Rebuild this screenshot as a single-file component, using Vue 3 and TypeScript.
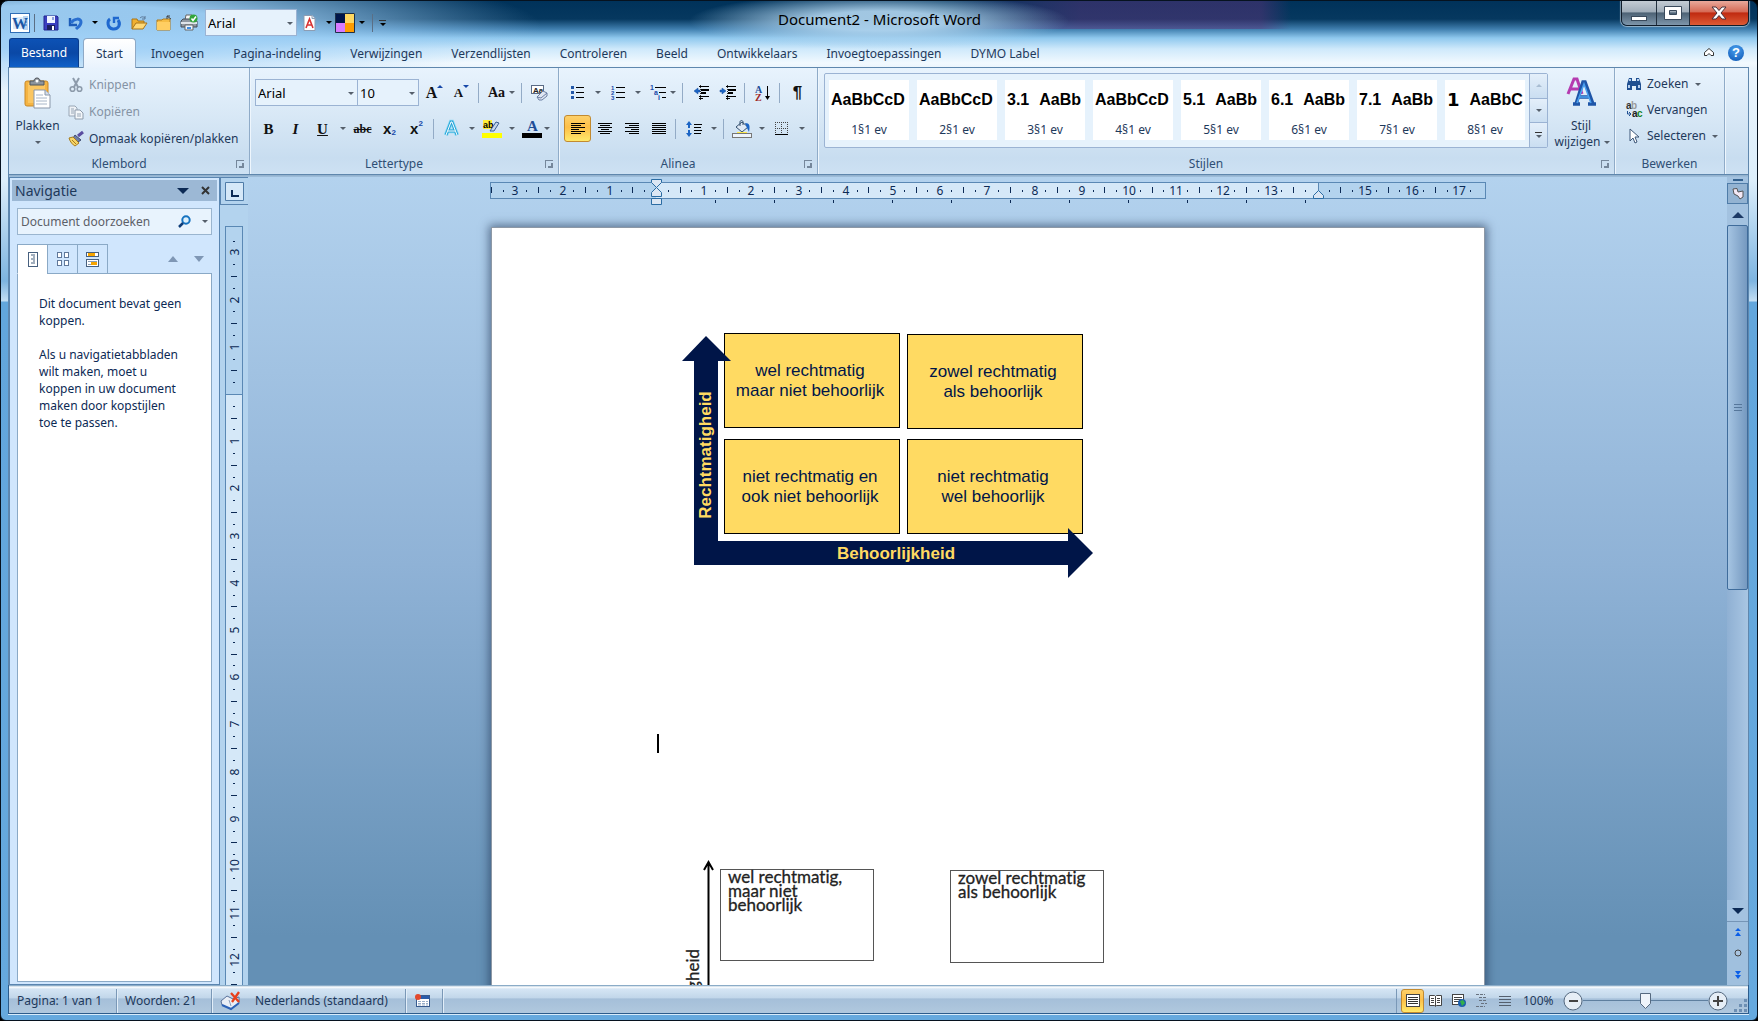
<script setup lang="ts">
import { ref } from 'vue'

interface Tool {
  name: string
  icon?: string
  text?: string
  kind?: string
  drop?: boolean
  tight?: boolean
  sep?: boolean
  active?: boolean
}

const font = ref('Arial')
const quickFont = ref('Arial')
const size = ref('10')
const zoom = ref(50)
const query = ref('')

const lines = (rows: [number, number, number][], c = '#000') =>
  rows.map(([x, y, w]) => `<rect x="${x}" y="${y}" width="${w}" height="1" fill="${c}"/>`).join('')

const icons: Record<string, string> = {
  word: '<rect x=".5" y=".5" width="19" height="19" fill="#fff" stroke="#2f6db5"/><rect x="3" y="4" width="13" height="12" fill="#dcebfa"/><path d="M13 3h5v14h-5z" fill="#b9d5f2"/><path d="M15 6h2M15 9h2M15 12h2" stroke="#2f6db5"/><text x="2" y="16" font-family="Liberation Serif, serif" font-weight="bold" font-size="16" fill="#1a57a5">W</text>',
  save: '<path d="M1 1h13l1 1v13H1z" fill="#3b3fc0" stroke="#23278f"/><rect x="4" y="1" width="8" height="7" fill="#eef3ff"/><rect x="9" y="2" width="2" height="3" fill="#8fa3dc"/><rect x="4" y="10" width="8" height="5" fill="#1d2160"/><rect x="9" y="11" width="2" height="4" fill="#fff"/>',
  undo: '<path d="M2 3v7h7" fill="none" stroke="#1c5cb8" stroke-width="2.4"/><path d="M3 8c3-5 10-5 10-1 0 4-3 5-5 7" fill="none" stroke="#2a6fd0" stroke-width="3"/>',
  redo: '<path d="M4 4C1 6 1 13 7 14c6 .5 8-5 5-9" fill="none" stroke="#1f68cf" stroke-width="3"/><path d="M8 8V3h5" fill="none" stroke="#1f68cf" stroke-width="2.4"/>',
  open: '<path d="M1 14V4h5l1 2h6v3" fill="#f0b030" stroke="#a87418"/><path d="M1 14L5 8h11l-4 6z" fill="#ffd976" stroke="#a87418"/><path d="M9 3c2-2 4-1 5 0m0-2v3h-3" fill="none" stroke="#5b7695"/>',
  folder: '<path d="M1 5h5l1-1h7v11H1z" fill="#f6bd45" stroke="#b07a1a"/><path d="M1 7h13v8H1z" fill="#ffce62"/><path d="M11 1l4 3M11 1h3M11 1v3" stroke="#444" fill="none"/>',
  print: '<path d="M5 6l1-5h6l1 5z" fill="#f6f6f6" stroke="#666"/><path d="M1 7l2-2h12l2 2v6H1z" fill="#8f98a2" stroke="#454d56"/><path d="M1 8h16v2H1z" fill="#dfe4e9"/><path d="M5 11h8v5H5z" fill="#eef6ff" stroke="#666"/><rect x="7" y="13" width="4" height="2" fill="#3e8ce0"/><circle cx="13.500" cy="4.500" r="4" fill="#32a53b"/><path d="M11.500 4.500l1.500 2 3-4" fill="none" stroke="#fff" stroke-width="1.500"/>',
  docA: '<path d="M1 .5h8l3 3v12H1z" fill="#fff" stroke="#8d9db3"/><path d="M9 .5v3h3" fill="#dfe7f1" stroke="#8d9db3"/><path d="M3 13l3.500-9L10 13M4.500 10h4" fill="none" stroke="#d93333" stroke-width="1.600"/>',
  swatch: '<path d="M0 0h10v10H0z" fill="#00154a"/><path d="M10 0h10v10H10z" fill="#ffd860"/><path d="M0 10h10v10H0z" fill="#d77bff"/><path d="M10 10h10v10H10z" fill="#ff9c00"/><path d="M.5.5h19v19H.5z" fill="none" stroke="#1d3148"/>',
  paste: '<rect x="1" y="4" width="23" height="25" rx="2" fill="#f5b443" stroke="#c98827"/><rect x="4" y="6" width="17" height="20" fill="#fbc661"/><path d="M6 4h4c0-4 6-4 6 0h4v4H6z" fill="#8d949c" stroke="#50565d"/><circle cx="13" cy="4" r="1.500" fill="#fff"/><path d="M10 13h11l5 5v13H10z" fill="#fff" stroke="#8a97aa"/><path d="M21 13v5h5" fill="#d5dfeb" stroke="#8a97aa"/><path d="M12 18h7M12 21h11M12 24h11M12 27h11" stroke="#a8b6c8"/>',
  cut: '<path d="M5 1l5 9M11 1L6 10" stroke="#8d9bab" stroke-width="2" fill="none"/><circle cx="4.500" cy="12" r="2.300" fill="none" stroke="#8d9bab" stroke-width="1.600"/><circle cx="11.500" cy="12" r="2.300" fill="none" stroke="#8d9bab" stroke-width="1.600"/>',
  copy: '<path d="M1 2h6l2 2v8H1z" fill="#eef2f7" stroke="#98a6b6"/><path d="M7 6h5l3 3v6H7z" fill="#f4f7fa" stroke="#8d9bab"/><path d="M3 5h3M3 7h3M3 9h3M9 10h4M9 12h4" stroke="#98a6b6"/>',
  brush: '<path d="M15 1l-5 4" stroke="#5a4da0" stroke-width="3"/><path d="M7 4l6 5-3 2-5-4z" fill="#6f7ea5" stroke="#404c70"/><path d="M1 7l4-1 6 6-4 3c-2-1-5-4-6-8z" fill="#f7d568" stroke="#a77c1c"/><path d="M4 9l4 4" stroke="#a77c1c"/>',
  clear: '<rect x=".5" y="1.500" width="12" height="8" fill="#fff" stroke="#5a6b85"/><text x="2" y="9" font-family="Liberation Sans, sans-serif" font-weight="bold" font-size="8" fill="#222">Aa</text><path d="M6 13l6-6 4 2v3l-5 4H8z" fill="#dfe6f2" stroke="#6b7fa3"/><path d="M6 13l4 1 6-5" fill="none" stroke="#6b7fa3"/>',
  glow: '<path d="M3 15L8 2h1l5 13M5 11h7" fill="none" stroke="#8fdcf5" stroke-width="4.500"/><path d="M3 15L8 2h1l5 13M5 11h7" fill="none" stroke="#2aa5d8" stroke-width="3"/><path d="M3 15L8 2h1l5 13M5 11h7" fill="none" stroke="#fff" stroke-width="1"/>',
  mark: '<rect x="0" y="13" width="20" height="5" fill="#ff0"/><rect x="1" y="0" width="9" height="9" fill="#ffef3a"/><text x="1" y="8" font-family="Liberation Sans, sans-serif" font-weight="bold" font-size="9">ab</text><path d="M8 11l6-9 3 1-5 8z" fill="#c5d6ec" stroke="#3b5f94"/>',
  color: '<rect x="0" y="13" width="20" height="5"/><text x="5" y="11" font-family="Liberation Serif, serif" font-weight="bold" font-size="15" fill="#1f4e97">A</text>',
  bullets: [2, 7, 12].map(y => `<rect x="0" y="${y - 1}" width="3" height="3" fill="#2458a8"/><rect x="5" y="${y}" width="8" height="1"/>`).join(''),
  numbers: [2, 7, 12].map((y, i) => `<text x="0" y="${y + 3}" font-family="Liberation Sans, sans-serif" font-weight="bold" font-size="6" fill="#1748a8">${i + 1}</text><rect x="5" y="${y}" width="9" height="1"/>`).join(''),
  multi: '<g font-family="Liberation Sans, sans-serif" font-weight="bold" font-size="7" fill="#1748a8"><text x="0" y="5">1</text><text x="4" y="10">a</text><text x="8" y="15">i</text></g>' + lines([[5, 2, 11], [9, 7, 7], [12, 12, 4]]),
  outdent: lines([[6, 1, 10], [8, 4, 8], [8, 5, 8], [8, 7, 5], [8, 8, 5], [6, 11, 10], [6, 13, 4]]) + '<path d="M5 3v2h2v2H5v2L1 6z" fill="#1b64c4" stroke="#1b4f9c" stroke-width=".5"/><path d="M7.500 0v15" stroke="#333" stroke-dasharray="1 1"/>',
  indent: lines([[6, 1, 10], [8, 4, 8], [8, 5, 8], [8, 7, 5], [8, 8, 5], [6, 11, 10], [6, 13, 4]]) + '<path d="M2 3v2H0v2h2v2l4-3z" fill="#1b64c4" stroke="#1b4f9c" stroke-width=".5"/><path d="M7.500 0v15" stroke="#333" stroke-dasharray="1 1"/>',
  sort: '<g font-family="Liberation Serif, serif" font-weight="bold" font-size="10"><text x="0" y="8" fill="#1f4e97">A</text><text x="0" y="16" fill="#a02828">Z</text></g><path d="M12.500 1v12" stroke="#000"/><path d="M10 11h5l-2.500 4z"/>',
  left: lines([[0, 0, 14], [0, 2, 10], [0, 4, 14], [0, 6, 8], [0, 8, 14], [0, 10, 10]]),
  center: lines([[0, 0, 14], [2, 2, 10], [0, 4, 14], [3, 6, 8], [0, 8, 14], [2, 10, 10]]),
  right: lines([[0, 0, 14], [4, 2, 10], [0, 4, 14], [6, 6, 8], [0, 8, 14], [4, 10, 10]]),
  justify: lines([[0, 0, 14], [0, 2, 14], [0, 4, 14], [0, 6, 14], [0, 8, 14], [0, 10, 14]]),
  spacing: '<path d="M3 0L0 4h2v8H0l3 4 3-4H4V4h2z" fill="#1b64c4"/><rect x="2" y="7" width="2" height="2" fill="#cfe2f4"/>' + lines([[8, 3, 8], [8, 6, 7], [8, 9, 8], [8, 12, 7]]),
  fill: '<rect x=".5" y="13.500" width="19" height="4" fill="#eef4fb" stroke="#777"/><path d="M4 7l6-5 6 5-6 5z" fill="#dfe9f5" stroke="#34506f"/><path d="M8 6V2c0-2 3-2 3 0v3" fill="none" stroke="#34506f"/><path d="M13 3c5 0 5 3 4 9l-2-4z" fill="#1b64c4"/><rect x="5" y="12" width="10" height="1" fill="#ffe94a"/>',
  borders: '<path d="M.5 0v12M6.500 0v12M12.500 0v12M0 .5h13M0 6.500h13" stroke="#444" stroke-dasharray="1 1"/><rect x="0" y="12" width="13" height="1"/>',
  styles: '<path d="M2 17L8 2h3l5 15M5 12h8" fill="none" stroke="#b53bb0" stroke-width="3"/><path d="M10 27L17 5h2l8 22M12 20h12M7 27h7M22 27h8" fill="none" stroke="#1e55a8" stroke-width="3.500"/><path d="M11 26L18 7l7 19M13 20h10" fill="none" stroke="#4aa0ee" stroke-width="1.500"/>',
  find: '<path d="M1 8l2-6h3v12H1zM15 8l-2-6h-3v12h5z" fill="#1f4f91"/><path d="M6 5h4v5H6z" fill="#1f4f91"/><path d="M3 3h2v2H3zM11 3h2v2h-2zM2 9h2v3H2zM12 9h2v3h-2z" fill="#b7d0ee"/>',
  replace: '<g font-family="Liberation Sans, sans-serif" font-weight="bold" font-size="10"><text x="0" y="7" fill="#333">a</text><text x="5" y="7" fill="#999">b</text><text x="6" y="15" fill="#222">a</text><text x="11" y="15" fill="#17852b">c</text></g><path d="M1.500 9v3h3M3 10l2 2-2 2" fill="none" stroke="#1f4f91"/>',
  select: '<path d="M4 1v12l3-3 2 5 2-1-2-5h4z" fill="#fff" stroke="#3d5678"/>',
  search: '<circle cx="8" cy="5" r="3.700" fill="#dff0fb" stroke="#1673c0" stroke-width="2"/><path d="M5 8l-4 4" stroke="#0d3c78" stroke-width="2.500"/>',
  navDoc: '<rect x=".5" y=".5" width="9" height="14" fill="#fff" stroke="#47607f"/><path d="M3 3h4M5 5h2M3 7h4M5 9h2M3 11h4" stroke="#47607f"/>',
  navGrid: '<g fill="#fff" stroke="#60789a"><rect x=".5" y=".5" width="4" height="5"/><rect x="7.500" y=".5" width="4" height="5"/><rect x=".5" y="8.500" width="4" height="5"/><rect x="7.500" y="8.500" width="4" height="5"/></g>',
  navList: '<rect x=".5" y=".5" width="12" height="4" fill="#fff" stroke="#47607f"/><rect x="2" y="1" width="7" height="3" fill="#f6a400"/><rect x=".5" y="7.500" width="12" height="7" fill="#fff" stroke="#47607f"/><path d="M2 9.500h9M2 12.500h9" stroke="#8a9db5"/><rect x="5" y="10" width="6" height="3" fill="#f6a400"/>',
  proof: '<path d="M1 10l6-5 6 3 6-2v6l-8 6-9-4z" fill="#e9eef6" stroke="#59719a"/><path d="M2 14l9 4 8-6" fill="none" stroke="#2c62b8" stroke-width="2"/><path d="M9 9l2 6" stroke="#8a9dbb"/><path d="M11 2l8 9M19 1l-7 10" stroke="#e8401c" stroke-width="2.300"/>',
  macro: '<rect x="1.500" y="2.500" width="13" height="11" fill="#fff" stroke="#375b8f"/><rect x="2" y="3" width="12" height="3" fill="#2a5caa"/><path d="M3 8.500h10M3 10.500h10M3 12h10" stroke="#98aec9" stroke-dasharray="3 1"/><circle cx="3" cy="4" r="3" fill="#e2492d"/>',
  vPrint: '<rect x=".5" y=".5" width="13" height="12" fill="#fff" stroke="#444"/><path d="M2 3.500h10M2 5.500h10M2 7.500h10M2 9.500h10" stroke="#333"/>',
  vRead: '<path d="M.5 1.500h5l1 1 1-1h5v10h-5l-1 1-1-1h-5z" fill="#fff" stroke="#444"/><path d="M6.500 2v10M2 4.500h3M2 6.500h3M2 8.500h3M8 4.500h3M8 6.500h3M8 8.500h3" stroke="#444"/>',
  vWeb: '<rect x=".5" y=".5" width="11" height="10" fill="#fff" stroke="#444"/><path d="M2 3.500h8M2 5.500h8M2 7.500h5" stroke="#444"/><circle cx="10" cy="9" r="4" fill="#1c5fae"/><path d="M8 7l3-1 2 3-3 3z" fill="#33b04a"/>',
  vOutline: '<path d="M0 .5h9M3 3.500h8M3 6.500h8M5 9.500h6M0 12.500h9" stroke="#68727f" stroke-dasharray="3 1"/>',
  vDraft: '<path d="M0 1.500h12M0 4.500h12M0 7.500h12M0 10.500h12" stroke="#55606e"/>',
}

const box = (name: string): string =>
  ({
    word: '0 0 20 20', swatch: '0 0 20 20', save: '0 0 16 16', undo: '0 0 16 16', redo: '0 0 16 16', print: '0 0 18 17', docA: '0 0 13 16',
    paste: '0 0 27 32', mark: '0 0 20 18', color: '0 0 20 18', fill: '0 0 20 18', bullets: '0 0 14 15', numbers: '0 0 14 15',
    left: '0 0 14 11', center: '0 0 14 11', right: '0 0 14 11', justify: '0 0 14 11', borders: '0 0 13 13', styles: '0 0 31 29',
    navDoc: '0 0 10 15', navGrid: '0 0 12 14', navList: '0 0 13 15', search: '0 0 13 14', proof: '0 0 21 20', glow: '0 0 17 17', clear: '0 0 17 17',
    vPrint: '0 0 14 13', vRead: '0 0 13 13', vWeb: '0 0 14 13', vOutline: '0 0 11 13', vDraft: '0 0 12 12',
  })[name] ?? '0 0 16 16'
const w = (name: string): string => box(name).split(' ')[2]
const h = (name: string): string => box(name).split(' ')[3]

const tabs = ['Invoegen', 'Pagina-indeling', 'Verwijzingen', 'Verzendlijsten', 'Controleren', 'Beeld', 'Ontwikkelaars', 'Invoegtoepassingen', 'DYMO Label']

const fontTop: Tool[] = [
  { name: 'Groter', text: 'A', kind: 'larger' },
  { name: 'Kleiner', text: 'A', kind: 'shrink' },
  { name: 's1', sep: true },
  { name: 'Hoofdlettergebruik', text: 'Aa', kind: 'case', drop: true, tight: true },
  { name: 's2', sep: true },
  { name: 'Opmaak wissen', icon: 'clear' },
]
const fontBottom: Tool[] = [
  { name: 'Vet', text: 'B', kind: 'bold' },
  { name: 'Cursief', text: 'I', kind: 'italic' },
  { name: 'Onderstrepen', text: 'U', kind: 'under', drop: true },
  { name: 'Doorhalen', text: 'abc', kind: 'strike' },
  { name: 'Subscript', text: 'x', kind: 'sub' },
  { name: 'Superscript', text: 'x', kind: 'sup' },
  { name: 's1', sep: true },
  { name: 'Teksteffecten', icon: 'glow', drop: true },
  { name: 'Markeren', icon: 'mark', drop: true },
  { name: 'Tekstkleur', icon: 'color', drop: true, tight: true },
]
const paraTop: Tool[] = [
  { name: 'Opsommingstekens', icon: 'bullets', drop: true },
  { name: 'Nummering', icon: 'numbers', drop: true },
  { name: 'Lijst met meerdere niveaus', icon: 'multi', drop: true, tight: true },
  { name: 's1', sep: true },
  { name: 'Inspringing verkleinen', icon: 'outdent' },
  { name: 'Inspringing vergroten', icon: 'indent' },
  { name: 's2', sep: true },
  { name: 'Sorteren', icon: 'sort' },
  { name: 's3', sep: true },
  { name: 'Alles weergeven', text: '¶', kind: 'pilcrow' },
]
const paraBottom: Tool[] = [
  { name: 'Links uitlijnen', icon: 'left', active: true },
  { name: 'Centreren', icon: 'center' },
  { name: 'Rechts uitlijnen', icon: 'right' },
  { name: 'Uitvullen', icon: 'justify' },
  { name: 's1', sep: true },
  { name: 'Regelafstand', icon: 'spacing', drop: true },
  { name: 's2', sep: true },
  { name: 'Arcering', icon: 'fill', drop: true },
  { name: 'Randen', icon: 'borders', drop: true },
]

const styleCells = [
  { lead: '', sample: 'AaBbCcD', label: '1§1 ev' },
  { lead: '', sample: 'AaBbCcD', label: '2§1 ev' },
  { lead: '3.1', sample: 'AaBb', label: '3§1 ev' },
  { lead: '', sample: 'AaBbCcD', label: '4§1 ev' },
  { lead: '5.1', sample: 'AaBb', label: '5§1 ev' },
  { lead: '6.1', sample: 'AaBb', label: '6§1 ev' },
  { lead: '7.1', sample: 'AaBb', label: '7§1 ev' },
  { lead: '1', sample: 'AaBbC', label: '8§1 ev', big: true },
]

/* Ruler marks: a number per centimetre, a tick at the half, dots at the quarters. */
const CM = 47.2
const marks = (from: number, to: number, origin: number, skip: number[]) => {
  const out: { pos: number; type: 'n' | 'l' | 'd'; label: number }[] = []
  for (let q = from; q <= to; q++) {
    const pos = Math.round(origin + (q * CM) / 4)
    const cm = Math.abs(q / 4)
    if (q % 4 === 0) {
      if (!skip.includes(q / 4)) out.push({ pos, type: 'n', label: cm })
    } else out.push({ pos, type: q % 2 === 0 ? 'l' : 'd', label: 0 })
  }
  return out
}
const hMarks = marks(-14, 69, 166, [0, 14])
const vMarks = marks(-13, 50, 168, [0])
const tabStops = Array.from({ length: 11 }, (_, i) => Math.round(166 + (i + 1) * 59))

const views = [
  { icon: 'vPrint', name: 'Afdrukweergave', active: true },
  { icon: 'vRead', name: 'Leesweergave' },
  { icon: 'vWeb', name: 'Weblayout' },
  { icon: 'vOutline', name: 'Overzicht' },
  { icon: 'vDraft', name: 'Concept' },
]
</script>

<template>
  <div class="window">
    <header class="titlebar">
      <div class="quick">
        <button class="word" aria-label="Word"><svg width="20" height="20" viewBox="0 0 20 20" v-html="icons.word" /></button>
        <i class="qsep" />
        <template v-for="q in ['save', 'undo', 'redo', 'open', 'folder', 'print']" :key="q">
          <button class="qtool" :aria-label="q"><svg :width="w(q)" :height="h(q)" :viewBox="box(q)" v-html="icons[q]" /></button>
          <button v-if="q === 'undo'" class="arrow dark" aria-label="Meer" />
        </template>
        <label class="combo quickfont">
          <select v-model="quickFont" aria-label="Lettertype snelkeuze"><option>Arial</option></select>
          <span class="arrow" />
        </label>
        <button class="qtool" aria-label="Stijl"><svg width="13" height="16" viewBox="0 0 13 16" v-html="icons.docA" /></button>
        <button class="arrow dark" aria-label="Meer" />
        <button class="word" aria-label="Kleuren"><svg width="20" height="20" viewBox="0 0 20 20" v-html="icons.swatch" /></button>
        <button class="arrow dark" aria-label="Meer" />
        <i class="qsep" />
        <button class="arrow dark lined" aria-label="Werkbalk aanpassen" />
      </div>
      <h1>Document2 - Microsoft Word</h1>
      <div class="controls">
        <div class="winbuttons">
          <button class="min" aria-label="Minimaliseren"><svg width="18" height="14"><rect x="1.500" y="8.500" width="15" height="4" fill="#fff" stroke="#3a4a5c" /></svg></button>
          <button class="max" aria-label="Maximaliseren"><svg width="18" height="14"><path d="M.5.5h17v13H.5zM5.500 4.500h7v4h-7z" fill="#fff" fill-rule="evenodd" stroke="#3a4a5c" /></svg></button>
          <button class="close" aria-label="Sluiten"><svg width="16" height="14"><path d="M1 1h4l3 3.500L11 1h4l-5 6 5 6h-4L8 9.500 5 13H1l5-6z" fill="#fff" stroke="#4a3038" /></svg></button>
        </div>
      </div>
    </header>

    <nav class="tabs" aria-label="Lint">
      <button class="file">Bestand</button>
      <button class="tab current">Start</button>
      <button v-for="t in tabs" :key="t" class="tab">{{ t }}</button>
      <span class="grow" />
      <button class="iconbtn" aria-label="Lint minimaliseren"><svg width="10" height="9"><path d="M.5 7.500v-3L5 .5l4.500 4v3L7 7.500 5 5.500l-2 2z" fill="#fff" stroke="#333" /></svg></button>
      <button class="help" aria-label="Help">?</button>
    </nav>

    <section class="ribbon">
      <div class="group clipboard">
        <div class="body">
          <button class="big">
            <svg width="27" height="32" viewBox="0 0 27 32" v-html="icons.paste" />
            <span>Plakken</span><span class="arrow" />
          </button>
          <div class="stack">
            <button disabled><svg width="16" height="16" v-html="icons.cut" />Knippen</button>
            <button disabled><svg width="16" height="16" v-html="icons.copy" />Kopiëren</button>
            <button><svg width="16" height="16" v-html="icons.brush" />Opmaak kopiëren/plakken</button>
          </div>
        </div>
        <footer>Klembord<i class="launch" /></footer>
      </div>

      <div class="group font">
        <div class="body rows">
          <div class="row">
            <label class="combo family"><select v-model="font" aria-label="Lettertype"><option>Arial</option></select><span class="arrow" /></label>
            <label class="combo size"><select v-model="size" aria-label="Tekengrootte"><option>10</option></select><span class="arrow" /></label>
            <template v-for="t in fontTop" :key="t.name">
              <i v-if="t.sep" class="sep" />
              <button v-else class="tool" :class="t.kind" :aria-label="t.name"><svg v-if="t.icon" :width="w(t.icon)" :height="h(t.icon)" :viewBox="box(t.icon)" v-html="icons[t.icon]" />{{ t.text }}</button>
              <button v-if="t.drop" class="arrow" :class="{ tight: t.tight }" aria-label="Meer" />
            </template>
          </div>
          <div class="row">
            <template v-for="t in fontBottom" :key="t.name">
              <i v-if="t.sep" class="sep" />
              <button v-else class="tool" :class="t.kind" :aria-label="t.name"><svg v-if="t.icon" :width="w(t.icon)" :height="h(t.icon)" :viewBox="box(t.icon)" v-html="icons[t.icon]" />{{ t.text }}<small v-if="t.kind === 'sub' || t.kind === 'sup'">2</small></button>
              <button v-if="t.drop" class="arrow" :class="{ tight: t.tight }" aria-label="Meer" />
            </template>
          </div>
        </div>
        <footer>Lettertype<i class="launch" /></footer>
      </div>

      <div class="group para">
        <div class="body rows">
          <div v-for="(r, n) in [paraTop, paraBottom]" :key="n" class="row">
            <template v-for="t in r" :key="t.name">
              <i v-if="t.sep" class="sep" />
              <button v-else class="tool" :class="[t.kind, { active: t.active }]" :aria-label="t.name"><svg v-if="t.icon" :width="w(t.icon)" :height="h(t.icon)" :viewBox="box(t.icon)" v-html="icons[t.icon]" />{{ t.text }}</button>
              <button v-if="t.drop" class="arrow" :class="{ tight: t.tight }" aria-label="Meer" />
            </template>
          </div>
        </div>
        <footer>Alinea<i class="launch" /></footer>
      </div>

      <div class="group styles">
        <div class="body">
          <div class="gallery">
            <div class="cells">
              <button v-for="s in styleCells" :key="s.label" class="cell">
                <span class="sample"><b v-if="s.lead" :class="{ first: s.big }">{{ s.lead }}</b><b>{{ s.sample }}</b></span>
                <span>{{ s.label }}</span>
              </button>
            </div>
            <div class="scroller">
              <button class="arrow up off" aria-label="Omhoog" />
              <button class="arrow" aria-label="Omlaag" />
              <button class="arrow lined" aria-label="Meer stijlen" />
            </div>
          </div>
          <button class="big change">
            <svg width="31" height="29" viewBox="0 0 31 29" v-html="icons.styles" />
            <span>Stijl</span>
            <span class="line">wijzigen <i class="arrow" /></span>
          </button>
        </div>
        <footer>Stijlen<i class="launch" /></footer>
      </div>

      <div class="group edit">
        <div class="body">
          <div class="stack">
            <button><svg width="16" height="16" v-html="icons.find" />Zoeken<i class="arrow" /></button>
            <button><svg width="16" height="16" v-html="icons.replace" />Vervangen</button>
            <button><svg width="16" height="16" v-html="icons.select" />Selecteren<i class="arrow" /></button>
          </div>
        </div>
        <footer>Bewerken</footer>
      </div>
    </section>

    <main class="work">
      <aside class="pane">
        <div class="panehead"><h2>Navigatie</h2><button class="arrow wide" aria-label="Opties" /><button class="x" aria-label="Sluiten"><svg width="9" height="9"><path d="M1 1l7 7M8 1L1 8" stroke="#333" stroke-width="2" /></svg></button></div>
        <label class="searchbox">
          <input v-model="query" type="text" placeholder="Document doorzoeken" aria-label="Document doorzoeken">
          <svg width="13" height="14" viewBox="0 0 13 14" v-html="icons.search" /><i class="arrow" />
        </label>
        <div class="panetabs">
          <button v-for="n in ['navDoc', 'navGrid', 'navList']" :key="n" :class="{ on: n === 'navDoc' }" :aria-label="n"><svg :width="w(n)" :height="h(n)" v-html="icons[n]" /></button>
          <span class="grow" />
          <i class="arrow up mid" /><i class="arrow mid" />
        </div>
        <div class="panebody">
          <p>Dit document bevat geen koppen.</p>
          <p>Als u navigatietabbladen wilt maken, moet u koppen in uw document maken door kopstijlen toe te passen.</p>
        </div>
      </aside>

      <div class="vside">
        <button class="corner" aria-label="Tabstop"><svg width="19" height="19"><path d="M.5.5h18v18H.5z" fill="#d5e8f8" stroke="#4f7ca8" /><path d="M7 8v6h7" fill="none" stroke="#0c2a55" stroke-width="2" /></svg></button>
        <svg class="vruler" width="18" height="1000">
          <rect x=".5" y=".5" width="17" height="1100" fill="#b3d3ee" stroke="#5a88b4" />
          <rect x="1" y="168" width="16" height="1000" fill="#d5e8f8" />
          <rect x="1" y="168" width="16" height="1" fill="#5a88b4" />
          <template v-for="m in vMarks" :key="m.pos">
            <text v-if="m.type === 'n'" :transform="`translate(14 ${m.pos}) rotate(-90)`" text-anchor="middle">{{ m.label }}</text>
            <rect v-else :x="m.type === 'l' ? 6 : 8" :y="m.pos" :width="m.type === 'l' ? 6 : 2" height="1" fill="#0c2a55" />
          </template>
        </svg>
      </div>

      <div class="desk">
        <svg class="hruler" width="996" height="28">
          <rect x=".5" y="4.500" width="995" height="16" fill="#b3d3ee" stroke="#5a88b4" />
          <rect x="166" y="5" width="662" height="15" fill="#d5e8f8" />
          <rect x="828" y="5" width="1" height="15" fill="#5a88b4" />
          <template v-for="m in hMarks" :key="m.pos">
            <text v-if="m.type === 'n'" :x="m.pos + 1" y="17" text-anchor="middle">{{ m.label }}</text>
            <rect v-else :x="m.pos" :y="m.type === 'l' ? 9 : 12" width="1" :height="m.type === 'l' ? 6 : 2" fill="#0c2a55" />
          </template>
          <rect v-for="t in tabStops" :key="t" :x="t" y="22" width="1" height="3" fill="#0c2a55" />
          <g fill="#dbe6f3" stroke="#2b6ca3">
            <path d="M161.500 1.500h10v3l-5 5-5-5z" />
            <path d="M161.500 18.500v-4l5-5 5 5v4z" />
            <path d="M161.500 20.500h10v6h-10z" />
            <path d="M823.500 20.500v-3l5-5 5 5v3z" />
          </g>
        </svg>
        <article class="page">
          <svg class="matrix" width="412" height="260">
            <g fill="#ffda62" stroke="#000">
              <rect x="42.500" y="5.500" width="175" height="94" /><rect x="225.500" y="6.500" width="175" height="94" />
              <rect x="42.500" y="111.500" width="175" height="94" /><rect x="225.500" y="111.500" width="175" height="94" />
            </g>
            <path d="M12 237V33H0L24 8l25 25H36v180h350v-13l25 25-25 25v-13z" fill="#001548" />
            <g text-anchor="middle">
              <text x="128" y="48">wel rechtmatig</text><text x="128" y="68">maar niet behoorlijk</text>
              <text x="311" y="49">zowel rechtmatig</text><text x="311" y="69">als behoorlijk</text>
              <text x="128" y="154">niet rechtmatig en</text><text x="128" y="174">ook niet behoorlijk</text>
              <text x="311" y="154">niet rechtmatig</text><text x="311" y="174">wel behoorlijk</text>
              <text class="axis" x="214" y="231">Behoorlijkheid</text>
              <text class="axis" transform="translate(29 127) rotate(-90)">Rechtmatigheid</text>
            </g>
          </svg>
          <i class="caret" />
          <svg class="sketch" width="430" height="260">
            <path d="M25.500 260V4M21 11l4.500-8 4.500 8" fill="none" stroke="#000" stroke-width="2" />
            <g fill="#fff" stroke="#555"><rect x="37.500" y="10.500" width="153" height="91" /><rect x="267.500" y="11.500" width="153" height="92" /></g>
            <text x="45" y="24">wel rechtmatig,</text><text x="45" y="38">maar niet</text><text x="45" y="52">behoorlijk</text>
            <text x="275" y="25">zowel rechtmatig</text><text x="275" y="39">als behoorlijk</text>
            <text transform="translate(16 90) rotate(-90)" text-anchor="end">Rechtmatigheid</text>
          </svg>
        </article>
      </div>

      <div class="vscroll">
        <i class="split" />
        <button class="toggle" aria-label="Liniaal"><svg width="12" height="12"><path d="M1 1l4-.5L6 4l5-1v6l-3 2-2-3-4-2z" fill="#f3e8f5" stroke="#555" /></svg></button>
        <button class="arrow up wide" aria-label="Omhoog" />
        <div class="track"><div class="thumb"><svg width="8" height="7"><path d="M0 .5h8M0 3.500h8M0 6.500h8" stroke="#56779b" /></svg></div></div>
        <button class="arrow wide" aria-label="Omlaag" />
        <div class="browse">
          <svg width="8" height="9"><path d="M4 0l3 3H1zM4 4l3 4H1z" fill="#0a5ee8" /></svg>
          <svg width="8" height="8"><circle cx="4" cy="4" r="3" fill="#a9c4e0" stroke="#444" /></svg>
          <svg width="8" height="9"><path d="M1 1h6L4 5zM1 5h6L4 9z" fill="#0a5ee8" /></svg>
        </div>
      </div>
    </main>

    <footer class="status">
      <span class="item">Pagina: 1 van 1</span>
      <span class="item">Woorden: 21</span>
      <span class="item lang"><svg width="21" height="20" viewBox="0 0 21 20" v-html="icons.proof" />Nederlands (standaard)</span>
      <span class="item"><svg width="16" height="16" v-html="icons.macro" /></span>
      <span class="grow" />
      <div class="views">
        <button v-for="v in views" :key="v.icon" :class="{ on: v.active }" :aria-label="v.name"><svg :width="w(v.icon)" :height="h(v.icon)" v-html="icons[v.icon]" /></button>
      </div>
      <span class="pct">100%</span>
      <button class="round" aria-label="Uitzoomen"><svg width="20" height="20"><circle cx="10" cy="10" r="9" fill="#e6eef6" stroke="#55697f" /><path d="M6 10h9" stroke="#444" stroke-width="2" /></svg></button>
      <input v-model="zoom" class="slider" type="range" min="0" max="100" aria-label="Zoomen">
      <button class="round" aria-label="Inzoomen"><svg width="20" height="20"><circle cx="10" cy="10" r="9" fill="#e6eef6" stroke="#55697f" /><path d="M5 10h10M10 5v10" stroke="#444" stroke-width="2" /></svg></button>
      <svg class="grip" width="14" height="14"><path d="M10 1h3v3h-3zM5 6h3v3H5zM10 6h3v3h-3zM0 11h3v3H0zM5 11h3v3H5zM10 11h3v3h-3z" fill="#6d8fb3" /></svg>
    </footer>
  </div>
</template>

<style>
body {
  margin: 0;
  background: #000;
}
</style>

<style scoped>
.window {
  box-sizing: border-box;
  display: flex;
  flex-direction: column;
  height: 100vh;
  padding: 0 8px 6px 7px;
  overflow: hidden;
  border: 1px solid #06121f;
  border-radius: 8px 8px 6px 6px;
  color: #1e395b;
  font: 12px/16px "Noto Sans", sans-serif;
  background:
    radial-gradient(ellipse 190px 28px at 50% 20px, rgba(178, 214, 240, 0.9) 35%, transparent 100%),
    radial-gradient(ellipse 470px 64px at 70px 26px, rgba(160, 208, 246, 0.95) 35%, transparent 100%),
    linear-gradient(90deg, transparent 940px, rgba(90, 50, 120, 0.5) 1080px, rgba(90, 50, 120, 0.5) 1260px, transparent 1290px) 0 0 / 100% 28px no-repeat,
    linear-gradient(#00325a 0, #06385f 18px, #3f7eae 28px, #8fc8ee 37px, #cfe9fb 48px, #f2f9fe 62px, #eaf4fc 67px, #dceefb 180px, #7db4e0 280px, #c3def3 300px, #62a6dc 301px, #66a9de 100%);
}
button {
  display: flex;
  align-items: center;
  justify-content: center;
  margin: 0;
  padding: 0;
  border: 0;
  background: none;
  color: inherit;
  font: inherit;
}
h1, h2, p { margin: 0; }
svg { display: block; flex: none; overflow: visible; }
i { font-style: normal; }
.grow { flex: 1; }

.arrow {
  display: flex;
  flex: none;
  align-items: center;
  justify-content: center;
  width: 13px;
  height: 16px;
}
.arrow::before {
  content: "";
  border: 3px solid transparent;
  border-top-color: #555f6b;
  border-bottom: 0;
}
.arrow.dark::before { border-top-color: #000; }
.arrow.up::before { border-top: 0; border-bottom: 3px solid #555f6b; }
.arrow.off::before { border-bottom-color: #a9bdd2; }
.arrow.tight { margin-left: -5px; }
.arrow.wide { width: 20px; }
.arrow.wide::before { border-width: 6px 6px 0; border-top-color: #0c2a55; }
.arrow.up.wide::before { border-width: 0 6px 6px; border-bottom-color: #1d3a66; }
.arrow.mid { width: 26px; }
.arrow.mid::before { border-width: 6px 5px 0; border-top-color: #7f97b5; }
.arrow.up.mid::before { border-width: 0 5px 6px; border-bottom-color: #7f97b5; }
.arrow.lined { flex-direction: column; }
.arrow.lined::after { content: ""; order: -1; width: 7px; height: 1px; margin-bottom: 2px; background: #333; }

.titlebar { display: flex; flex: none; height: 37px; }
.quick { display: flex; flex: 1; align-items: center; height: 27px; padding: 8px 0 0 2px; }
.word { width: 20px; height: 20px; }
.qtool { width: 25px; height: 24px; }
.qsep { width: 1px; height: 18px; margin: 0 3px 0 4px; background: #5b6f85; }
.titlebar h1 { padding-top: 8px; color: #000; font: 15px/20px "Noto Sans", sans-serif; }
.controls { display: flex; flex: 1; justify-content: flex-end; }
.winbuttons { display: flex; height: 24px; border: solid #101c2a; border-width: 0 1px 1px; border-radius: 0 0 6px 6px; overflow: hidden; box-shadow: 0 0 1px 1px rgba(255, 255, 255, 0.5); }
.winbuttons button { box-sizing: border-box; width: 33px; background: linear-gradient(#c3ccd4 0, #a0adb9 45%, #4d6275 50%, #7e96ab 100%); border-right: 1px solid #22303f; }
.winbuttons .min { width: 35px; }
.winbuttons .min svg { margin-top: 4px; }
.winbuttons .close { width: 58px; border: 0; background: linear-gradient(#e9a99b 0, #d66a55 45%, #c02a10 50%, #dd5a35 100%); }

.combo { position: relative; display: block; box-sizing: border-box; height: 27px; border: 1px solid #9bb3d3; background: #e6f2fc; }
.combo select { width: 100%; height: 25px; padding: 0 2px; border: 0; background: none; appearance: none; color: #000; font: 13px "Noto Sans", sans-serif; }
.combo .arrow { position: absolute; right: 0; top: 5px; pointer-events: none; }
.quickfont { width: 92px; margin-left: 4px; }
.family { width: 103px; }
.size { width: 62px; margin: 0 2px 0 -1px; }

.tabs { display: flex; flex: none; height: 29px; padding-left: 1px; }
.tab { padding: 2px 14px 0 15px; }
.file { width: 70px; margin-right: 4px; border: 1px solid #0a3c8c; border-bottom: 0; border-radius: 3px 3px 0 0; background: linear-gradient(#0d52b5, #0a48a6 50%, #0f60c8); color: #fff; }
.tab.current { position: relative; padding: 1px 12px 0; margin-bottom: -1px; border: 1px solid #8ea9c6; border-bottom: 0; border-radius: 4px 4px 0 0; background: linear-gradient(#fff, #e9f3fd); }
.iconbtn { width: 20px; }
.help { width: 16px; height: 16px; margin: 7px 5px 0 9px; border-radius: 8px; background: radial-gradient(circle at 50% 30%, #4aa0ee, #0b55b4); color: #fff; font: bold 13px/16px "Liberation Sans", sans-serif; }

.ribbon { display: flex; flex: none; height: 106px; border: 1px solid #5f87ad; background: linear-gradient(#e8f3fd, #d8e8f6 45%, #c8ddf0 85%, #cde1f3); }
.group { display: flex; flex: none; flex-direction: column; border-right: 1px solid #8fabc8; box-shadow: 1px 0 0 #eef6fd; }
.group .body { display: flex; flex: 1; }
.group > footer { display: flex; align-items: center; justify-content: center; position: relative; height: 20px; padding-right: 20px; color: #2f4f75; }
.launch { position: absolute; right: 5px; top: 6px; width: 8px; height: 8px; box-sizing: border-box; border: solid #75879b; border-width: 1px 0 0 1px; }
.launch::after { content: ""; display: block; width: 5px; height: 5px; margin: 2px 0 0 2px; border: solid #75879b; border-width: 0 2px 2px 0; box-sizing: border-box; }
.big { flex-direction: column; justify-content: flex-start; padding-top: 9px; }
.big > span { white-space: nowrap; }
.big svg { margin-bottom: 9px; }
.clipboard { width: 240px; }
.clipboard .big { width: 57px; }
.stack { display: flex; flex-direction: column; padding: 3px 0 0 2px; }
.stack button { justify-content: flex-start; height: 27px; gap: 5px; white-space: nowrap; }
.stack button:disabled { color: #8593a5; }
.font { width: 308px; }
.rows { flex-direction: column; gap: 9px; padding: 11px 0 0 5px; }
.row { display: flex; flex: none; align-items: center; height: 27px; }
.tool { box-sizing: border-box; flex: none; width: 27px; height: 27px; color: #111; font: bold 15px/16px "Liberation Serif", serif; }
.tool.active { border: 1px solid #c28a30; border-radius: 3px; background: linear-gradient(#fdd06a, #fdbf48 45%, #ffe96b); }
.sep { flex: none; width: 1px; height: 20px; margin: 0 4px 0 3px; background: #93abc6; }
.tool.larger { font-size: 16px; }
.tool.shrink { font-size: 13px; }
.tool.case { font-size: 14px; }
.tool.larger::after, .tool.shrink::after { content: ""; align-self: flex-start; margin-top: 6px; border: 3px solid transparent; border-top: 0; border-bottom-color: #1748a8; }
.tool.shrink::after { border-top: 3px solid #1748a8; border-bottom: 0; }
.tool.italic { font-style: italic; }
.tool.under { text-decoration: underline; }
.tool.strike { text-decoration: line-through; font-size: 12px; }
.tool small { font: bold 8px/8px "Liberation Sans", sans-serif; color: #1748a8; }
.tool.sub, .tool.sup { font: bold 15px/16px "Liberation Sans", sans-serif; }
.tool.sub small { margin-top: 9px; }
.tool.sup small { margin-bottom: 9px; }
.tool.pilcrow { font: bold 17px/18px "Liberation Sans", sans-serif; }
.para { width: 258px; }
.styles { flex: 1; min-width: 0; }
.styles .body { min-width: 0; }
.gallery { display: flex; flex: 1; min-width: 0; height: 73px; margin: 5px 0 0 6px; border: 1px solid #9bb3d3; border-radius: 2px; background: #e6f2fc; }
.cells { display: flex; flex: 1; gap: 8px; min-width: 0; overflow: hidden; padding: 6px 0 7px 4px; }
.cell { box-sizing: border-box; flex: none; flex-direction: column; justify-content: space-between; width: 80px; padding: 9px 2px 2px; background: #fff; overflow: hidden; }
.sample { display: flex; gap: 10px; align-items: center; align-self: flex-start; width: 100%; height: 22px; color: #000; font: bold 16px/20px "Liberation Sans", sans-serif; }
.sample .first { font-family: "DejaVu Sans", sans-serif; font-size: 18px; }
.scroller { display: flex; flex: none; flex-direction: column; width: 17px; border-left: 1px solid #9bb3d3; }
.scroller button { flex: 1; width: auto; background: linear-gradient(#e4effa, #cadef1); }
.scroller button + button { border-top: 1px solid #9bb3d3; }
.change { width: 66px; }
.change svg { margin-bottom: 12px; }
.change .line { display: flex; padding-left: 6px; }
.edit { width: 109px; margin-right: 23px; }
.group.edit > footer { padding-right: 0; }
.edit .stack { padding: 3px 0 0 11px; }
.edit .stack button { height: 26px; }
.edit .stack .arrow { margin-left: -2px; }

.work { display: flex; flex: 1; min-height: 0; padding-top: 2px; border: solid #5f87ad; border-width: 0 1px; background: linear-gradient(#8faecb 0, #b3d3ee 4px); }
.pane { display: flex; flex: none; flex-direction: column; box-sizing: border-box; width: 211px; padding: 2px; border: 1px solid #5a85b0; background: #d0e6fd; }
.panehead { display: flex; align-items: center; height: 21px; padding-left: 3px; background: #9cb8d5; }
.panehead h2 { flex: 1; color: #1e395b; font: 14px/20px "Noto Sans", sans-serif; }
.panehead .x { width: 24px; }
.searchbox { display: flex; align-items: center; height: 25px; margin: 7px 5px 9px; border: 1px solid #9ab5cf; background: #e8f3fd; }
.searchbox input { flex: 1; min-width: 0; padding: 0 3px; border: 0; outline: 0; background: none; color: #1e395b; font: 12px/20px "Noto Sans", sans-serif; }
.searchbox input::placeholder { color: #5c6068; }
.searchbox .arrow { margin-left: 7px; }
.panetabs { position: relative; display: flex; align-items: center; height: 30px; margin: 0 5px -1px; }
.panetabs button { box-sizing: border-box; width: 31px; height: 30px; margin-right: -1px; border: 1px solid #8aa9c6; }
.panetabs .on { border-bottom-color: #fff; background: #fff; }
.panebody { flex: 1; margin: 0 5px; padding: 21px 26px 0 21px; border: 1px solid #8aa9c6; background: #fff; color: #0c2a55; line-height: 17px; }
.panebody p + p { margin-top: 17px; }

.vside { display: flex; flex: none; flex-direction: column; align-items: center; width: 28px; overflow: hidden; background: #b3d3ee; }
.corner { box-sizing: border-box; flex: none; width: 29px; height: 28px; margin-bottom: 21px; border: 1px solid #5a85b0; }
.vruler text, .hruler text { fill: #0c2a55; font: 12px "Noto Sans", sans-serif; }

.desk { display: flex; flex: 1; flex-direction: column; align-items: center; min-width: 0; overflow: hidden; background: linear-gradient(#b3d2ee, #8fb2d6 48%, #6490b5 94%); }
.page { display: flex; flex: none; flex-direction: column; align-items: flex-start; box-sizing: border-box; width: 994px; height: 1400px; margin-top: 21px; padding-top: 100px; border: 1px solid #8d98a5; background: #fff; box-shadow: 0 0 9px 2px rgba(30, 50, 80, 0.6); }
.hruler { margin-top: 1px; }
.matrix { margin-left: 190px; }
.matrix text { fill: #001548; font: 17px "Liberation Sans", sans-serif; }
.matrix .axis { fill: #ffda62; font-weight: bold; }
.caret { width: 2px; height: 19px; margin: 146px 0 106px 165px; background: #000; }
.sketch { margin-left: 191px; }
.sketch text { fill: #222; stroke: #222; stroke-width: 0.3px; font: 17px Lato, sans-serif; font-variant-ligatures: none; }

.vscroll { display: flex; flex: none; flex-direction: column; align-items: center; width: 21px; background: #a3c2e0; }
.split { width: 10px; height: 2px; margin: 2px 0; background: #33618f; }
.toggle { box-sizing: border-box; width: 21px; height: 21px; border: 1px solid #4f7ca8; background: #93b3d2; }
.vscroll > .arrow { height: 21px; flex: none; }
.track { display: flex; flex: 1; flex-direction: column; width: 100%; background: linear-gradient(90deg, #8fb0d3, #a9c6e3); }
.thumb { box-sizing: border-box; display: flex; flex: 0 0 54%; align-items: center; justify-content: center; border: 1px solid #3f6c9b; border-radius: 2px; background: linear-gradient(90deg, #a5c4e2, #7599c0); }
.browse { display: flex; flex-direction: column; align-items: center; justify-content: space-around; width: 100%; height: 63px; border-top: 1px solid #7595b6; background: #a0c0de; }

.status { display: flex; flex: none; align-items: center; height: 25px; padding-top: 3px; border: solid #2c5c8c; border-width: 0 1px 1px; box-shadow: 0 1px 0 #d8ecfb; background: linear-gradient(#6490b5 0, #fff 2px, #d5e5f4 4px, #c2d7ea 45%, #a5bfd9 50%, #b0c8de 100%); }
.item { display: flex; align-items: center; gap: 14px; height: 24px; padding: 0 10px 0 8px; border-right: 1px solid #7a98b7; box-shadow: 1px 0 0 #e2eef9; }
.item:first-child { width: 89px; }
.item:nth-child(2) { width: 76px; }
.lang { width: 175px; }
.item:nth-child(4) { padding: 0 11px 0 9px; }
.views { display: flex; padding-left: 4px; border-left: 1px solid #7a98b7; }
.views button { box-sizing: border-box; width: 23px; height: 24px; }
.views .on { border: 1px solid #c28a30; border-radius: 3px; background: linear-gradient(#fdd06a, #fdbf48 45%, #ffe96b); }
.pct { width: 34px; padding: 0 6px 0 7px; }
.round { width: 20px; height: 20px; }
.slider { width: 125px; height: 18px; margin: 0; appearance: none; background: linear-gradient(#5f7f9f, #5f7f9f) 0 50% / 100% 1px no-repeat; }
.slider::-webkit-slider-thumb { appearance: none; width: 11px; height: 16px; border: 0; background: url("data:image/svg+xml,%3Csvg xmlns='http://www.w3.org/2000/svg' width='11' height='16'%3E%3Cpath d='M.5.5h10v10l-5 5-5-5z' fill='%23eef4fa' stroke='%2355697f'/%3E%3C/svg%3E"); }
.grip { margin: 8px 0 0 6px; }
</style>
